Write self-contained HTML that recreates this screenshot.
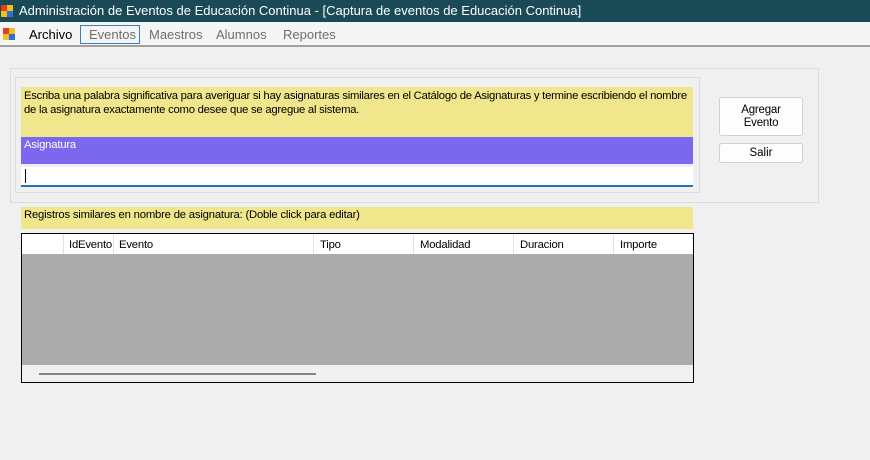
<!DOCTYPE html>
<html><head><meta charset="utf-8"><style>
*{margin:0;padding:0;box-sizing:border-box}
body{width:870px;height:460px;background:#f0f0f0;font-family:"Liberation Sans",sans-serif;font-size:12px;position:relative;overflow:hidden;color:#000}
.a{position:absolute}
</style></head><body>
<div class="a" style="left:0;top:0;width:870px;height:22px;background:#1b4a57;color:#fff;font-size:13px;line-height:22px;padding-left:19px">Administración de Eventos de Educación Continua - [Captura de eventos de Educación Continua]</div>
<div class="a" style="left:1px;top:5px;width:12px;height:12px;"><div class="a" style="left:0;top:0;width:6px;height:6px;background:#e04020"></div><div class="a" style="left:6px;top:0;width:6px;height:6px;background:#f0c020"></div><div class="a" style="left:0;top:6px;width:6px;height:6px;background:#f0c020"></div><div class="a" style="left:6px;top:6px;width:6px;height:6px;background:#3070d0"></div></div>
<div class="a" style="left:0;top:22px;width:870px;height:25px;background:#f5f5f5;border-bottom:2px solid #a0a0a0"></div>
<div class="a" style="left:3px;top:28px;width:12px;height:12px;"><div class="a" style="left:0;top:0;width:6px;height:6px;background:#e04020"></div><div class="a" style="left:6px;top:0;width:6px;height:6px;background:#f0c020"></div><div class="a" style="left:0;top:6px;width:6px;height:6px;background:#f0c020"></div><div class="a" style="left:6px;top:6px;width:6px;height:6px;background:#3070d0"></div></div>
<div class="a" style="left:29px;top:27px;font-size:13px">Archivo</div>
<div class="a" style="left:80px;top:25px;width:60px;height:19px;border:1px solid #3a80c0;background:#f5f5f5"></div>
<div class="a" style="left:89px;top:27px;font-size:13px;color:#6d6d6d">Eventos</div>
<div class="a" style="left:149px;top:27px;font-size:13px;color:#6d6d6d">Maestros</div>
<div class="a" style="left:216px;top:27px;font-size:13px;color:#6d6d6d">Alumnos</div>
<div class="a" style="left:283px;top:27px;font-size:13px;color:#6d6d6d">Reportes</div>

<div class="a" style="left:10px;top:68px;width:809px;height:135px;border:1px solid #dcdcdc"></div>
<div class="a" style="left:15px;top:77px;width:685px;height:116px;border:1px solid #dcdcdc"></div>
<div class="a" style="left:21px;top:87px;width:672px;height:50px;background:#f0e68c;padding:2px 3px;line-height:14px;font-size:11.3px;letter-spacing:-0.25px">Escriba una palabra significativa para averiguar si hay asignaturas similares en el Catálogo de Asignaturas y termine escribiendo el nombre de la asignatura exactamente como desee que se agregue al sistema.</div>
<div class="a" style="left:21px;top:137px;width:672px;height:27px;background:#7b68ee;color:#fff;padding:2px 3px;font-size:11.3px;letter-spacing:-0.2px">Asignatura</div>
<div class="a" style="left:21px;top:167px;width:672px;height:20px;background:#fff;border-bottom:2px solid #2a70b0"></div>
<div class="a" style="left:25px;top:169px;width:1px;height:14px;background:#000"></div>
<div class="a" style="left:719px;top:97px;width:84px;height:39px;background:#fdfdfd;border:1px solid #d0d0d0;border-radius:3px;text-align:center;line-height:13px;padding-top:6px;font-size:11.5px;letter-spacing:-0.2px">Agregar<br>Evento</div>
<div class="a" style="left:719px;top:143px;width:84px;height:20px;background:#fdfdfd;border:1px solid #d0d0d0;border-radius:3px;text-align:center;line-height:18px;font-size:11.5px">Salir</div>

<div class="a" style="left:21px;top:207px;width:672px;height:22px;background:#f0e68c;padding:2px 3px;font-size:11.3px;letter-spacing:-0.2px">Registros similares en nombre de asignatura: (Doble click para editar)</div>
<div class="a" style="left:21px;top:233px;width:673px;height:150px;border:1px solid #000;background:#f0f0f0;overflow:hidden">
 <div class="a" style="left:0;top:0;width:671px;height:20px;background:#fff;font-size:11.3px;line-height:22px;letter-spacing:-0.2px">
  <div class="a" style="left:41px;top:0;width:1px;height:20px;background:#e0e0e0"></div>
  <div class="a" style="left:47px;width:44px;overflow:hidden;white-space:nowrap">IdEvento</div>
  <div class="a" style="left:91px;top:0;width:1px;height:20px;background:#e0e0e0"></div>
  <div class="a" style="left:97px">Evento</div>
  <div class="a" style="left:291px;top:0;width:1px;height:20px;background:#e0e0e0"></div>
  <div class="a" style="left:298px">Tipo</div>
  <div class="a" style="left:391px;top:0;width:1px;height:20px;background:#e0e0e0"></div>
  <div class="a" style="left:398px">Modalidad</div>
  <div class="a" style="left:491px;top:0;width:1px;height:20px;background:#e0e0e0"></div>
  <div class="a" style="left:498px">Duracion</div>
  <div class="a" style="left:591px;top:0;width:1px;height:20px;background:#e0e0e0"></div>
  <div class="a" style="left:598px">Importe</div>
 </div>
 <div class="a" style="left:0;top:20px;width:671px;height:111px;background:#ababab"></div>
 <div class="a" style="left:17px;top:139px;width:277px;height:2px;background:#858585"></div>
</div>
</body></html>
